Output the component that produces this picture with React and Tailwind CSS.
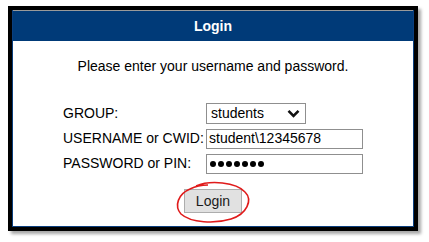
import React from "react";

export default function App() {
  const font = { fontFamily: '"Liberation Sans", Arial, sans-serif' };
  return (
    <div className="w-[429px] h-[242px] bg-white pt-[6px] pl-[8px] overflow-hidden" style={font}>
      <div className="relative w-[410px] h-[225px] border-4 border-black shadow-[3px_3px_3px_rgba(0,0,0,0.35)]">
        <div className="h-full flex flex-col border border-t-0 border-[#0b3f7e] bg-white">
          <div className="h-[31px] bg-[#003a78] border-t border-[#9a9a9a] flex items-center justify-center text-white font-bold text-[14px]">
            Login
          </div>
          <div className="flex flex-col items-center">
            <div className="mt-[17px] h-[16px] leading-[16px] text-[14px] text-black">
              Please enter your username and password.
            </div>
            <div className="mt-[27px] flex flex-col w-[300px] text-[14px] text-black">
              <div className="h-[25px] flex items-center">
                <div className="w-[143px]">GROUP:</div>
                <div className="w-[100px] h-[21px] border border-[#8f8f8f] flex items-center justify-between pl-[4px] pr-[5px]">
                  <span>students</span>
                  <svg width="13" height="9" viewBox="0 0 13 9">
                    <path d="M1.5 1.8 L6.5 6.8 L11.5 1.8" fill="none" stroke="#111" strokeWidth="2.6" />
                  </svg>
                </div>
              </div>
              <div className="h-[25px] flex items-center">
                <div className="w-[143px] whitespace-nowrap">USERNAME or CWID:</div>
                <div className="w-[157px] h-[20px] border border-[#8f8f8f] flex items-center pl-[2px]">
                  student\12345678
                </div>
              </div>
              <div className="h-[25px] flex items-center">
                <div className="w-[143px]">PASSWORD or PIN:</div>
                <div className="w-[157px] h-[20px] border border-[#8f8f8f] flex items-center pl-[3px] gap-[2px]">
                  {[0, 1, 2, 3, 4, 5, 6].map((i) => (
                    <span key={i} className="w-[6px] h-[6px] rounded-full bg-black" />
                  ))}
                </div>
              </div>
            </div>
            <div className="mt-[13px] w-[58px] h-[24px] bg-[#e1e1e1] border border-[#adadad] flex items-center justify-center text-[14px] text-[#1a1a1a]">
              Login
            </div>
          </div>
        </div>
        <svg className="absolute left-[162px] top-[170px]" width="80" height="46" viewBox="0 0 80 46">
          <path
            d="M22 6 C36 0 62 2 71 12 C79 20 73 34 57 39 C41 44 17 43 7 34 C0 26 4 14 16 9 C22 6 30 5 34 5"
            fill="none"
            stroke="#e01b1b"
            strokeWidth="1.6"
          />
        </svg>
      </div>
    </div>
  );
}
